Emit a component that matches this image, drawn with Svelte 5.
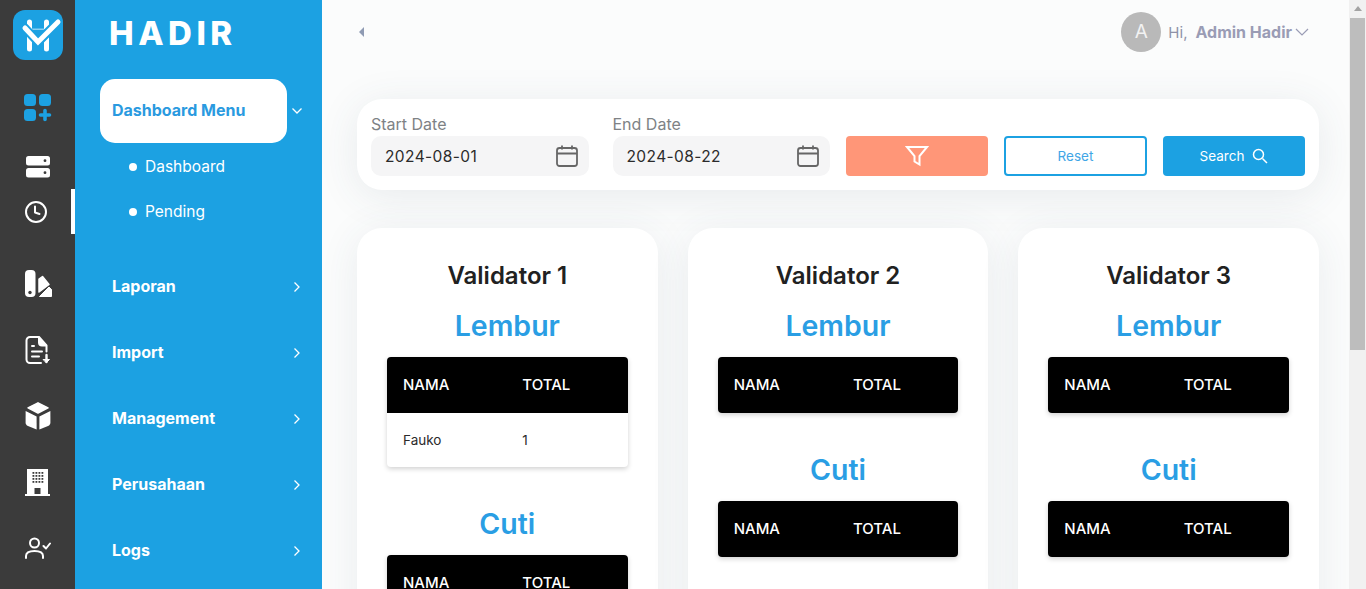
<script>
  const menus = ['Laporan', 'Import', 'Management', 'Perusahaan', 'Logs'];
  const validators = [
    { name: 'Validator 1', lembur: [{ nama: 'Fauko', total: 1 }] },
    { name: 'Validator 2', lembur: [] },
    { name: 'Validator 3', lembur: [] }
  ];
</script>

<div class="app">
  <nav class="rail">
    <div class="logo">
      <svg width="50" height="50" viewBox="0 0 50 50">
        <path d="M16.500 12v27M33.500 12v27" stroke="#fff" stroke-width="5" stroke-linecap="round" fill="none" />
        <path d="M16 20h18" stroke="#fff" stroke-width="2.500" fill="none" />
        <path d="M11 17l14 15L46 11" stroke="#1ca1e2" stroke-width="9" fill="none" />
        <path d="M17 19.500h16l-8 7z" fill="#1ca1e2" />
        <path d="M12 18l13 14L45 12" stroke="#fff" stroke-width="5" stroke-linecap="round" fill="none" />
      </svg>
    </div>
    <div class="rail-item first">
      <svg width="28" height="28" viewBox="0 0 28 28" fill="#1ca1e2">
        <rect x="0" y="0" width="12" height="12" rx="3.500" />
        <rect x="15" y="0" width="12" height="12" rx="3.500" />
        <rect x="0" y="15" width="12" height="12" rx="3.500" />
        <path d="M21 16.500v9M16.500 21h9" stroke="#1ca1e2" stroke-width="3.600" stroke-linecap="round" />
      </svg>
    </div>
    <div class="rail-item short">
      <svg width="26" height="24" viewBox="0 0 26 24">
        <rect x="1" y="1" width="24" height="9.500" rx="2.500" fill="#fff" />
        <rect x="1" y="13" width="24" height="9.500" rx="2.500" fill="#fff" />
        <circle cx="20" cy="5.700" r="1.400" fill="#3b3b3b" />
        <circle cx="20" cy="17.700" r="1.400" fill="#3b3b3b" />
      </svg>
    </div>
    <div class="rail-item short active">
      <svg width="24" height="24" viewBox="0 0 24 24" fill="none" stroke="#fff" stroke-width="2" stroke-linecap="round" stroke-linejoin="round">
        <circle cx="12" cy="12" r="10" />
        <path d="M11 6.500V12.500L15.500 14" />
      </svg>
    </div>
    <div class="rail-item tall gap">
      <svg width="28" height="28" viewBox="0 0 28 28" fill="#fff">
        <rect x="1" y="0" width="10.500" height="27" rx="4" />
        <circle cx="6" cy="22.500" r="1.700" fill="#3b3b3b" />
        <path d="M15 22V9l3.500-2.500L25 14.500z" stroke="#fff" stroke-width="1.500" stroke-linejoin="round" />
        <path d="M15.500 26.500L25 17l2.500 2.500v7z" stroke="#fff" stroke-width="1" stroke-linejoin="round" />
      </svg>
    </div>
    <div class="rail-item tall">
      <svg width="26" height="28" viewBox="0 0 26 28" fill="none" stroke="#fff" stroke-width="2" stroke-linecap="round" stroke-linejoin="round">
        <path d="M14 1H5a3.500 3.500 0 0 0-3.500 3.500v19A3.500 3.500 0 0 0 5 27h11M14 1l7.500 8.500v6" />
        <path d="M14 1.500v5a3 3 0 0 0 3 3h4" fill="#fff" />
        <path d="M7 10h2M7 15.500h10M7 20.500h7" />
        <path d="M21.500 19v7" stroke-width="2.400" />
        <path d="M18.500 23.500h6l-3 3z" fill="#fff" stroke-width="1" />
      </svg>
    </div>
    <div class="rail-item tall">
      <svg width="26" height="28" viewBox="0 0 26 28" fill="#fff">
        <path d="M13 .8l10 5-10 5.200-10-5.200z" stroke="#fff" stroke-width="1.500" stroke-linejoin="round" />
        <path d="M.6 9l11 5.500V27.500L3 24c-1.600-.7-2.400-1.800-2.400-3.500z" />
        <path d="M25.400 9l-11 5.500V27.500L23 24c1.600-.7 2.400-1.800 2.400-3.500z" />
      </svg>
    </div>
    <div class="rail-item tall">
      <svg width="27" height="28" viewBox="0 0 27 28">
        <path d="M3 26V1h21v25z" fill="#fff" />
        <path d="M1 26h25v2H1z" fill="#fff" />
        <g fill="#3b3b3b">
          {#each [8.500, 11.500, 14.500, 17.500] as x}
            {#each [4, 7, 10, 13] as y}
              <rect {x} {y} width="1.800" height="1.800" />
            {/each}
          {/each}
          <rect x="10.500" y="20" width="6" height="6" />
        </g>
      </svg>
    </div>
    <div class="rail-item tall">
      <svg width="26" height="22" viewBox="0 0 26 22" fill="none" stroke="#fff" stroke-width="2" stroke-linecap="round" stroke-linejoin="round">
        <circle cx="9.500" cy="6" r="4.500" />
        <path d="M1 21v-2c0-3 3-5 8.500-5S18 16 18 19v2" />
        <path d="M18.500 9l2.500 2.500 4-5" />
      </svg>
    </div>
  </nav>

  <aside class="side">
    <div class="brand">HADIR</div>
    <div class="menu-open">
      <span class="pill">Dashboard Menu</span>
      <svg class="chev" width="12" height="12" viewBox="0 0 12 12" fill="none" stroke="#fff" stroke-width="1.300"><path d="M1.500 3.500L6 8l4.500-4.500" /></svg>
    </div>
    <ul class="sub">
      <li>Dashboard</li>
      <li>Pending</li>
    </ul>
    {#each menus as m}
      <div class="menu">
        <span>{m}</span>
        <svg width="12" height="12" viewBox="0 0 12 12" fill="none" stroke="#fff" stroke-width="1.300"><path d="M3.500 2.500L8 7l-4.500 4.500" /></svg>
      </div>
    {/each}
  </aside>

  <main class="main">
    <header class="top">
      <span class="toggle"></span>
      <div class="user">
        <span class="avatar">A</span>
        <span class="hi">Hi,</span>
        <b>Admin Hadir</b>
        <svg width="14" height="14" viewBox="0 0 14 14" fill="none" stroke="#9a9cb5" stroke-width="1.200"><path d="M1 4l6 6 6-6" /></svg>
      </div>
    </header>

    <section class="filter">
      <div class="dates">
        <label class="field">
          <span>Start Date</span>
          <div class="input">
            2024-08-01
            <svg width="22" height="22" viewBox="0 0 22 22" fill="none" stroke="#666" stroke-width="1.800"><rect x="1" y="3" width="20" height="18" rx="2.500" /><path d="M1 8.500h20M6 .5v4M16 .5v4" /></svg>
          </div>
        </label>
        <label class="field">
          <span>End Date</span>
          <div class="input">
            2024-08-22
            <svg width="22" height="22" viewBox="0 0 22 22" fill="none" stroke="#666" stroke-width="1.800"><rect x="1" y="3" width="20" height="18" rx="2.500" /><path d="M1 8.500h20M6 .5v4M16 .5v4" /></svg>
          </div>
        </label>
      </div>
      <div class="buttons">
        <button class="btn funnel" aria-label="Filter">
          <svg width="24" height="22" viewBox="0 0 24 22" fill="none" stroke="#fff" stroke-width="2"><path d="M2 2h20l-7.500 9v8.500l-5-3V11z" /></svg>
        </button>
        <button class="btn reset">Reset</button>
        <button class="btn search">
          Search
          <svg width="16" height="16" viewBox="0 0 16 16" fill="none" stroke="#fff" stroke-width="1.500"><circle cx="6.500" cy="6.500" r="5" /><path d="M10.500 10.500l4.500 4.500" /></svg>
        </button>
      </div>
    </section>

    <section class="cards">
      {#each validators as v}
        <article class="card">
          <h2>{v.name}</h2>
          <h3>Lembur</h3>
          <table>
            <thead><tr><th>NAMA</th><th>TOTAL</th></tr></thead>
            <tbody>
              {#each v.lembur as row}
                <tr><td>{row.nama}</td><td>{row.total}</td></tr>
              {/each}
            </tbody>
          </table>
          <h3 class="next">Cuti</h3>
          <table>
            <thead><tr><th>NAMA</th><th>TOTAL</th></tr></thead>
            <tbody></tbody>
          </table>
        </article>
      {/each}
    </section>
  </main>

  <div class="scrollbar">
    <span class="arrow"></span>
    <span class="thumb"></span>
  </div>
</div>

<style>
  :global(body) {
    margin: 0;
    font-family: Inter, "Liberation Sans", sans-serif;
  }

  .app {
    display: flex;
    height: 100vh;
    overflow: hidden;
  }

  .rail {
    width: 75px;
    flex: none;
    background: #3b3b3b;
    display: flex;
    flex-direction: column;
    align-items: stretch;
    padding-top: 10px;
    box-sizing: border-box;
  }

  .logo {
    width: 50px;
    height: 50px;
    margin-left: 13px;
    background: #1ca1e2;
    border-radius: 12px;
  }

  .rail-item {
    display: flex;
    align-items: center;
    justify-content: center;
    height: 66px;
  }

  .rail-item.first {
    height: 44px;
    margin-top: 26px;
  }

  .rail-item.short {
    height: 45px;
  }

  .rail-item.first + .short {
    margin-top: 14px;
  }

  .rail-item.active {
    border-right: 4px solid #fff;
    box-sizing: border-box;
  }

  .rail-item.gap {
    margin-top: 17px;
  }

  .side {
    width: 247px;
    flex: none;
    background: #1ca1e2;
    color: #fff;
    box-sizing: border-box;
    padding: 0 0 0 25px;
  }

  .brand {
    height: 79px;
    box-sizing: border-box;
    padding: 13px 0 0 9px;
    font-size: 33px;
    font-weight: 800;
    letter-spacing: 4.500px;
    line-height: 40px;
  }

  .menu-open {
    display: flex;
    align-items: center;
    height: 64px;
  }

  .pill {
    width: 187px;
    height: 64px;
    box-sizing: border-box;
    padding-left: 12px;
    line-height: 62px;
    background: #fff;
    color: #2a9ae0;
    border-radius: 15px;
    font-size: 16px;
    font-weight: 700;
  }

  .chev {
    margin-left: 4px;
  }

  .sub {
    list-style: none;
    margin: 1px 0 20px;
    padding: 0 0 0 45px;
    font-size: 15.500px;
  }

  .sub li {
    height: 45px;
    line-height: 45px;
    position: relative;
  }

  .sub li::before {
    content: '';
    position: absolute;
    left: -16px;
    top: 19px;
    width: 8px;
    height: 8px;
    border-radius: 50%;
    background: #fff;
  }

  .menu {
    display: flex;
    align-items: center;
    justify-content: space-between;
    height: 64px;
    margin-bottom: 2px;
    padding: 0 19px 0 12px;
    font-size: 16px;
    font-weight: 700;
  }

  .main {
    flex: 1;
    min-width: 0;
    overflow: hidden;
    background: #fbfcfc;
    padding: 0 30px 0 35px;
    box-sizing: border-box;
  }

  .scrollbar {
    width: 17px;
    flex: none;
    background: #f1f1f1;
    display: flex;
    flex-direction: column;
    align-items: center;
  }

  .arrow {
    width: 0;
    height: 0;
    margin: 6px 0 7px;
    border: 4px solid transparent;
    border-top: 0;
    border-bottom: 5px solid #a3a3a3;
  }

  .thumb {
    width: 15px;
    height: 332px;
    background: #bdbdbd;
  }

  .top {
    display: flex;
    align-items: center;
    justify-content: space-between;
    height: 64px;
    padding-bottom: 35px;
  }

  .toggle {
    width: 0;
    height: 0;
    margin-left: 2px;
    border: 5px solid transparent;
    border-left: 0;
    border-right: 5px solid #8f9bb3;
  }

  .user {
    display: flex;
    align-items: center;
    padding-right: 10px;
    font-size: 16px;
    color: #8f92a8;
  }

  .avatar {
    width: 40px;
    height: 40px;
    border-radius: 50%;
    background: #b9b9b9;
    color: #f2f2f2;
    font-size: 19px;
    text-align: center;
    line-height: 40px;
    margin-right: 8px;
  }

  .hi {
    margin-right: 8px;
    margin-left: -1px;
    font-size: 15px;
  }

  .user b {
    margin-right: 3px;
    font-size: 16px;
    color: #9a9cb5;
  }

  .filter {
    display: flex;
    justify-content: space-between;
    height: 91px;
    padding: 14px 14px 0;
    box-sizing: border-box;
    background: #fff;
    border-radius: 25px;
    box-shadow: 0 6px 40px rgba(60, 80, 100, 0.1);
  }

  .dates {
    display: flex;
    gap: 24px;
    width: 459px;
  }

  .field {
    display: block;
    flex: 1;
    font-size: 16px;
    color: #7e8285;
  }

  .field span {
    display: block;
    height: 23px;
    line-height: 22px;
  }

  .input {
    display: flex;
    align-items: center;
    justify-content: space-between;
    height: 40px;
    padding: 0 11px 0 14px;
    background: #f5f5f6;
    border-radius: 10px;
    color: #2b2b2b;
    font-size: 15.500px;
    letter-spacing: 0.400px;
  }

  .buttons {
    display: flex;
    gap: 16px;
    padding-top: 23px;
  }

  .btn {
    width: 142px;
    height: 40px;
    border-radius: 4px;
    border: 0;
    font: inherit;
    font-size: 13.500px;
    color: #fff;
    display: flex;
    align-items: center;
    justify-content: center;
    gap: 8px;
  }

  .funnel {
    background: #ff9678;
  }

  .reset {
    width: 143px;
    background: #fff;
    border: 2px solid #1ca1e2;
    color: #3fa6e6;
  }

  .search {
    background: #1ca1e2;
  }

  .cards {
    display: grid;
    grid-template-columns: repeat(3, 1fr);
    gap: 30px;
    margin-top: 38px;
    padding-bottom: 40px;
  }

  .card {
    background: #fff;
    border-radius: 25px;
    padding: 30px;
    min-height: 687px;
    box-sizing: border-box;
    box-shadow: 0 6px 40px rgba(60, 80, 100, 0.09);
    text-align: center;
  }

  h2 {
    margin: 0;
    font-size: 24px;
    line-height: 36px;
    font-weight: 600;
    color: #212121;
  }

  h3 {
    margin: 14px 0 13px;
    font-size: 28.500px;
    line-height: 36px;
    font-weight: 600;
    color: #2a9ee4;
  }

  h3.next {
    margin-top: 38.500px;
    margin-bottom: 13.500px;
  }

  table {
    width: 100%;
    border-collapse: separate;
    border-spacing: 0;
    table-layout: fixed;
    text-align: left;
    border-radius: 4px;
    box-shadow: 0 2px 5px rgba(0, 0, 0, 0.18);
    overflow: hidden;
  }

  th {
    height: 56px;
    padding: 0 16px 2px;
    box-sizing: border-box;
    background: #000;
    color: #fff;
    font-size: 15px;
    font-weight: 500;
  }

  th:last-child {
    padding-left: 15px;
  }

  td {
    height: 54px;
    padding: 0 16px;
    font-size: 13.500px;
    color: #2b2b2b;
  }

  td:last-child {
    padding-left: 15px;
  }
</style>
